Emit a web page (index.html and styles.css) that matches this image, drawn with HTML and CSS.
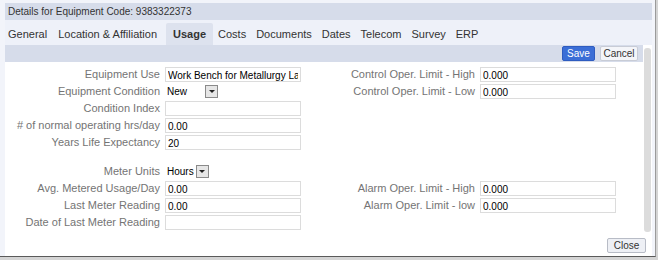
FILE: index.html
```html
<!DOCTYPE html>
<html lang="en">
<head>
    <meta charset="UTF-8">
    <title>Equipment Details</title>
    <link rel="stylesheet" href="styles.css">
</head>
<body>
    <div class="dialog">
        <div class="title">Details for Equipment Code: 9383322373</div>
        <div class="tabs">
            <span class="tab first">General</span>
            <span class="tab">Location &amp; Affiliation</span>
            <span class="tab active">Usage</span>
            <span class="tab">Costs</span>
            <span class="tab">Documents</span>
            <span class="tab">Dates</span>
            <span class="tab">Telecom</span>
            <span class="tab">Survey</span>
            <span class="tab">ERP</span>
        </div>
        <div class="panel">
            <div class="main">
                <div class="toolbar">
                    <button class="btn save">Save</button>
                    <button class="btn cancel">Cancel</button>
                </div>
                <div class="form">
                    <label class="lbl r1">Equipment Use</label>
                    <div class="field r1"><input class="txt" value="Work Bench for Metallurgy Lab"></div>
                    <label class="lbl right r1">Control Oper. Limit - High</label>
                    <div class="field right r1"><input class="txt" value="0.000"></div>

                    <label class="lbl r2">Equipment Condition</label>
                    <div class="field r2"><span class="select wide"><span class="sel-text">New</span><span class="sel-btn"></span></span></div>
                    <label class="lbl right r2">Control Oper. Limit - Low</label>
                    <div class="field right r2"><input class="txt" value="0.000"></div>

                    <label class="lbl r3">Condition Index</label>
                    <div class="field r3"><input class="txt" value=""></div>

                    <label class="lbl r4"># of normal operating hrs/day</label>
                    <div class="field r4"><input class="txt" value="0.00"></div>

                    <label class="lbl r5">Years Life Expectancy</label>
                    <div class="field r5"><input class="txt" value="20"></div>

                    <label class="lbl r7">Meter Units</label>
                    <div class="field r7"><span class="select"><span class="sel-text">Hours</span><span class="sel-btn"></span></span></div>

                    <label class="lbl r8">Avg. Metered Usage/Day</label>
                    <div class="field r8"><input class="txt" value="0.00"></div>
                    <label class="lbl right r8">Alarm Oper. Limit - High</label>
                    <div class="field right r8"><input class="txt" value="0.000"></div>

                    <label class="lbl r9">Last Meter Reading</label>
                    <div class="field r9"><input class="txt" value="0.00"></div>
                    <label class="lbl right r9">Alarm Oper. Limit - low</label>
                    <div class="field right r9"><input class="txt" value="0.000"></div>

                    <label class="lbl r10">Date of Last Meter Reading</label>
                    <div class="field r10"><input class="txt" value=""></div>
                </div>
            </div>
            <div class="scroll"><div class="thumb"></div></div>
        </div>
        <div class="footer">
            <button class="btn close">Close</button>
        </div>
    </div>
</body>
</html>
```

FILE: styles.css
```css
* {
    margin: 0;
    padding: 0;
    box-sizing: border-box;
}
body {
    background: #d4d4d4;
    font-family: 'Liberation Sans', Arial, sans-serif;
    width: 658px;
    height: 260px;
    overflow: hidden;
}
.dialog {
    width: 656px;
    height: 257px;
    padding: 3px 3px 0 5px;
    background: #f2f4fa;
    border-right: 1px solid #9a9a9a;
    border-bottom: 1px solid #5a5a5a;
    display: flex;
    flex-direction: column;
}
.title {
    height: 17px;
    line-height: 17px;
    padding-left: 3px;
    background: #d6dcea;
    color: #333;
    font-size: 10px;
}
.tabs {
    height: 25px;
    display: flex;
    align-items: flex-end;
    background: #eef1f9;
}
.tab {
    height: 22px;
    line-height: 22px;
    padding: 0 5px;
    font-size: 11px;
    color: #333;
}
.tab.first {
    padding: 0 6px 0 3px;
}
.tab.active {
    margin-left: 4px;
    padding: 0 7px;
    font-weight: bold;
    background: #dde2ee;
    border-radius: 2px 2px 0 0;
}
.panel {
    display: flex;
    height: 191px;
    background: #fff;
}
.main {
    width: 638px;
}
.toolbar {
    height: 17px;
    background: #d6dcea;
    display: flex;
    justify-content: flex-end;
    align-items: center;
    gap: 5px;
    padding-right: 5px;
}
.btn {
    height: 15px;
    padding: 0;
    font-family: 'Liberation Sans', Arial, sans-serif;
    font-size: 10px;
    line-height: 13px;
    color: #333;
    background: #f4f5f9;
    border: 1px solid #c8ccd6;
    border-radius: 2px;
}
.btn.save {
    width: 33px;
    color: #fff;
    background: #3b6ed6;
    border-color: #2e5cc0;
}
.btn.cancel {
    width: 38px;
}
.btn.close {
    width: 39px;
    background: #eef0f5;
    border-color: #b8bcc6;
}
.form {
    display: grid;
    grid-template-columns: 155px 136px 169px 136px;
    grid-template-rows: repeat(5, 17px) 12px repeat(4, 17px);
    column-gap: 5px;
    padding-top: 4px;
}
.lbl {
    grid-column: 1;
    text-align: right;
    font-size: 11px;
    line-height: 17px;
    color: #747474;
    white-space: nowrap;
}
.lbl.right {
    grid-column: 3;
}
.field {
    grid-column: 2;
    display: flex;
    align-items: center;
}
.field.right {
    grid-column: 4;
}
.r1 { grid-row: 1; }
.r2 { grid-row: 2; }
.r3 { grid-row: 3; }
.r4 { grid-row: 4; }
.r5 { grid-row: 5; }
.r7 { grid-row: 7; }
.r8 { grid-row: 8; }
.r9 { grid-row: 9; }
.r10 { grid-row: 10; }
.txt {
    width: 136px;
    height: 15px;
    padding: 2px 2px 0;
    border: 1px solid #dcdcdc;
    font-family: 'Liberation Sans', Arial, sans-serif;
    font-size: 10px;
    color: #000;
    outline: none;
}
.select {
    display: flex;
    align-items: center;
    height: 14px;
}
.sel-text {
    padding: 0 2px 0 2px;
    font-size: 10px;
    color: #000;
}
.select.wide .sel-text {
    width: 40px;
}
.sel-btn {
    width: 13px;
    height: 13px;
    background: #e6e6e6;
    border: 1px solid #8a8a8a;
    display: flex;
    align-items: center;
    justify-content: center;
}
.sel-btn::after {
    content: '';
    border-left: 3px solid transparent;
    border-right: 3px solid transparent;
    border-top: 3px solid #222;
}
.scroll {
    width: 9px;
    padding: 3px 1px 4px 1px;
}
.thumb {
    height: 100%;
    width: 7px;
    background: #dcdcdc;
    border-radius: 3px;
}
.footer {
    flex: 1;
    background: #fff;
    display: flex;
    justify-content: flex-end;
    padding: 2px 6px 0 0;
}
```
